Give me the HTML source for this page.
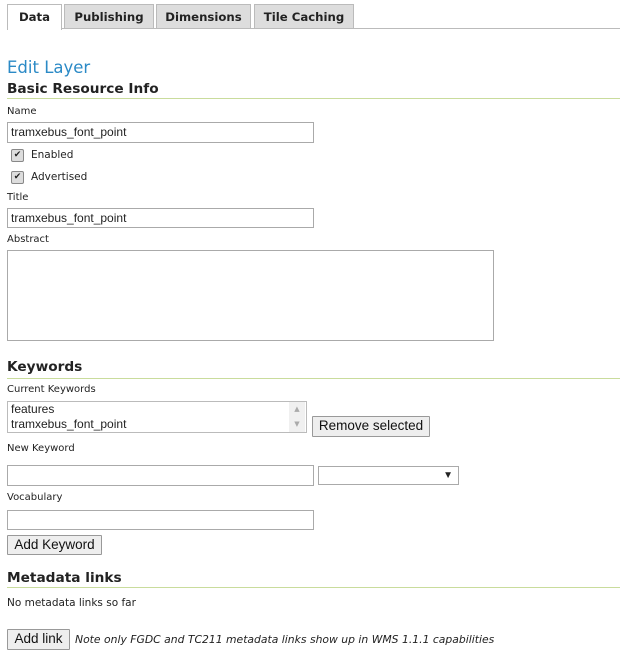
<!DOCTYPE html><html><head><style>
body{margin:0;width:620px;height:656px;background:#fff;font-family:"DejaVu Sans","Liberation Sans",sans-serif;color:#222;position:relative;overflow:hidden}
.a{position:absolute}
.tab{position:absolute;top:4px;height:23px;background:#ddd;border:1px solid #bbb;border-bottom:none;font-weight:bold;font-size:11.7px;text-align:center;line-height:24px;color:#222}
.lbl{position:absolute;left:7px;font-size:10px;color:#222}
.h{position:absolute;left:7px;font-weight:bold;font-size:13.7px;color:#222}
.line{position:absolute;left:7px;right:0;height:1px;background:#c9dc9c}
.inp{position:absolute;left:7px;border:1px solid #aaa;background:#fff;font-family:"Liberation Sans",sans-serif;font-size:12px;line-height:18px;padding-left:3px;box-sizing:border-box;color:#222}
.btn{position:absolute;border:1px solid #999;background:#eee;font-family:"Liberation Sans",sans-serif;font-size:13.5px;text-align:center;box-sizing:border-box;line-height:18px;color:#111;border-radius:1px}
.cb{position:absolute;left:11px;width:11px;height:11px;border:1px solid #888;border-radius:2px;background:#ddd;font-size:9px;line-height:11px;text-align:center}
</style></head><body>
<div class="a" style="left:61px;right:0;top:28px;height:1px;background:#bbb"></div>
<div class="tab" style="left:7px;width:53px;background:#fff;height:25px">Data</div>
<div class="tab" style="left:64px;width:88px">Publishing</div>
<div class="tab" style="left:156px;width:93px">Dimensions</div>
<div class="tab" style="left:254px;width:98px">Tile Caching</div>
<div class="a" style="left:7px;top:58px;font-size:16.5px;color:#2b8ac6">Edit Layer</div>
<div class="h" style="top:81px">Basic Resource Info</div>
<div class="line" style="top:98px"></div>
<div class="lbl" style="top:106px">Name</div>
<div class="inp" style="top:122px;width:307px;height:21px">tramxebus_font_point</div>
<div class="cb" style="top:149px">✔</div><div class="a" style="left:31px;top:149px;font-size:10.5px">Enabled</div>
<div class="cb" style="top:171px">✔</div><div class="a" style="left:31px;top:171px;font-size:10.5px">Advertised</div>
<div class="lbl" style="top:192px">Title</div>
<div class="inp" style="top:208px;width:307px;height:20px">tramxebus_font_point</div>
<div class="lbl" style="top:234px">Abstract</div>
<div class="inp" style="top:250px;width:487px;height:91px"></div>
<div class="h" style="top:359px">Keywords</div>
<div class="line" style="top:378px"></div>
<div class="lbl" style="top:384px">Current Keywords</div>
<div class="inp" style="top:401px;width:300px;height:32px;line-height:15px;border-color:#bbb">features<br>tramxebus_font_point</div>
<div class="a" style="left:289px;top:402px;width:16px;height:30px;background:#f0f0f0;color:#aaa;font-size:7px;text-align:center;line-height:15px">▲<br>▼</div>
<div class="btn" style="left:312px;top:416px;width:118px;height:21px">Remove selected</div>
<div class="lbl" style="top:443px">New Keyword</div>
<div class="inp" style="top:465px;width:307px;height:21px"></div>
<div class="inp" style="left:318px;top:466px;width:141px;height:19px;border-color:#aaa;font-size:10px;text-align:right;padding-right:5px">▼</div>
<div class="lbl" style="top:492px">Vocabulary</div>
<div class="inp" style="top:510px;width:307px;height:20px"></div>
<div class="btn" style="left:7px;top:535px;width:95px;height:20px">Add Keyword</div>
<div class="h" style="top:570px">Metadata links</div>
<div class="line" style="top:587px"></div>
<div class="a" style="left:7px;top:597px;font-size:10.5px">No metadata links so far</div>
<div class="btn" style="left:7px;top:629px;width:63px;height:21px">Add link</div>
<div class="a" style="left:75px;top:633px;font-size:10.8px;font-style:italic">Note only FGDC and TC211 metadata links show up in WMS 1.1.1 capabilities</div>
</body></html>
